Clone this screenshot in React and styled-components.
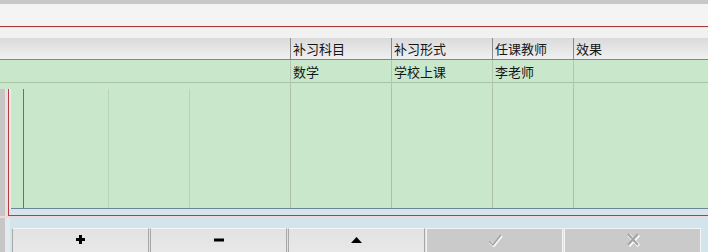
import React from 'react'
import styled, {createGlobalStyle} from 'styled-components'

const GlobalStyle = createGlobalStyle`
  html, body {
    margin: 0;
    padding: 0;
    background: #f1f1f1;
    overflow: hidden;
  }
  body {
    font-family: "Noto Sans CJK SC", "Noto Sans", sans-serif;
  }
`

const Page = styled.div`
  width: 708px;
  height: 252px;
  display: flex;
  flex-direction: column;
  overflow: hidden;
  background: #f1f1f1;
`

const TopStrip = styled.div`
  height: 4px;
  background: #c8c8c8;
`

const Toolbar = styled.div`
  height: 22px;
  background: #f4f4f4;
  border-bottom: 1px solid #a53a3a;
`

const ToolbarGap = styled.div`
  height: 10px;
  border-top: 1px solid #f6dcdc;
  background: #f1f1f1;
`

const Header = styled.div`
  display: grid;
  grid-template-columns: 290px 101px 101px 81px 1fr;
  height: 21px;
  background: linear-gradient(#dadada, #f0f0f0);
  border-bottom: 1px solid #7d8b7d;
`

const HeadCell = styled.div`
  border-left: ${(p) => (p.$first ? 'none' : '1px solid #8a8a8a')};
  padding-left: 2px;
  font-size: 13px;
  line-height: 21px;
  color: #161616;
  white-space: nowrap;
`

const DataRow = styled.div`
  display: grid;
  grid-template-columns: 290px 101px 101px 81px 1fr;
  height: 22px;
  background: #c9e8cb;
  border-bottom: 1px solid #a9c3a9;
`

const DataCell = styled.div`
  border-left: ${(p) => (p.$first ? 'none' : '1px solid #b2c6b2')};
  padding-left: 2px;
  font-size: 13px;
  line-height: 23px;
  color: #161616;
  white-space: nowrap;
`

const FillRow = styled(DataRow)`
  height: 6px;
  border-bottom: none;
`

const Body = styled.div`
  display: flex;
  height: 128px;
`

const Gutter = styled.div`
  width: 8px;
  flex: none;
  background: linear-gradient(90deg, #c6c6c6 0 5px, #e6e2e2 5px);
`

const Frame = styled.div`
  flex: 1;
  display: flex;
  flex-direction: column;
  border-left: 1px solid #b33c3c;
  border-bottom: 1px solid #b33c3c;
  padding-left: 2px;
  background: #f7e8e8;
`

const GridArea = styled.div`
  flex: 1;
  display: grid;
  grid-template-columns: 12px 85px 81px 101px 101px 101px 81px 1fr;
  background: #c9e8cb;
  border-bottom: 1px solid #6f8696;
`

const lineColor = (p) => {
  if (p.$first) return 'none'
  if (p.$dark) return '1px solid #667566'
  if (p.$faint) return '1px solid #b9d3b9'
  return '1px solid #aabfaa'
}

const GridCol = styled.div`
  border-left: ${lineColor};
`

const BlueStrip = styled.div`
  height: 6px;
  background: #d6e5ec;
  margin-left: -2px;
`

const Footer = styled.div`
  flex: 1;
  display: flex;
  background: #d4e4ec;
  border-top: 2px solid #efd8dc;
`

const FooterGutter = styled.div`
  width: 12px;
  flex: none;
  background: linear-gradient(90deg, #c6c6c6 0 5px, #e4e9eb 5px 10px, #d4e4ec 10px);
`

const ButtonBar = styled.div`
  display: flex;
  gap: 1px;
  padding-top: 10px;
  align-items: flex-start;
`

const Button = styled.div`
  box-sizing: border-box;
  width: 137px;
  height: 24px;
  display: flex;
  align-items: center;
  justify-content: center;
  padding-bottom: 2px;
  background: ${(p) => (p.$disabled ? '#cacaca' : 'linear-gradient(#e2e2e2, #e8e8e8)')};
  border: 1px solid ${(p) => (p.$disabled ? '#f4f4f4' : '#a8a8a8')};
  border-top-color: ${(p) => (p.$disabled ? '#f4f4f4' : '#f6f6f6')};
  border-bottom: none;
`

const PlusIcon = () => (
  <svg width="9" height="9" viewBox="0 0 9 9">
    <path d="M3 0h3v3h3v3H6v3H3V6H0V3h3z" fill="#000" />
  </svg>
)

const MinusIcon = () => (
  <svg width="10" height="4" viewBox="0 0 10 4">
    <rect x="0" y="0.5" width="10" height="3" fill="#000" />
  </svg>
)

const UpIcon = () => (
  <svg width="11" height="6" viewBox="0 0 11 6">
    <path d="M5.5 0L11 6H0z" fill="#000" />
  </svg>
)

const CheckIcon = () => (
  <svg width="16" height="14" viewBox="0 0 16 14">
    <path d="M2.5 8.5l3.5 3.5 8-10" fill="none" stroke="#fbfbfb" strokeWidth="2.4" transform="translate(0.8 0.8)" />
    <path d="M2.5 8.5l3.5 3.5 8-10" fill="none" stroke="#a0a0a0" strokeWidth="1.4" />
  </svg>
)

const CrossIcon = () => (
  <svg width="16" height="15" viewBox="0 0 16 15">
    <path d="M3 2l10 11M13 2L3 13" fill="none" stroke="#fbfbfb" strokeWidth="3.4" transform="translate(0.8 0.8)" />
    <path d="M3 2l10 11M13 2L3 13" fill="none" stroke="#a4a4a4" strokeWidth="2" />
  </svg>
)

const headers = ['补习科目', '补习形式', '任课教师', '效果']
const rowData = ['数学', '学校上课', '李老师', '']

const App = () => {
  return (
    <Page>
      <GlobalStyle />
      <TopStrip />
      <Toolbar />
      <ToolbarGap />
      <Header>
        <HeadCell $first />
        {headers.map((h) => (
          <HeadCell key={h}>{h}</HeadCell>
        ))}
      </Header>
      <DataRow>
        <DataCell $first />
        {rowData.map((d, i) => (
          <DataCell key={i}>{d}</DataCell>
        ))}
      </DataRow>
      <FillRow>
        <DataCell $first />
        <DataCell />
        <DataCell />
        <DataCell />
        <DataCell />
      </FillRow>
      <Body>
        <Gutter />
        <Frame>
          <GridArea>
            <GridCol $first />
            <GridCol $dark />
            <GridCol $faint />
            <GridCol $faint />
            <GridCol />
            <GridCol />
            <GridCol />
            <GridCol />
          </GridArea>
          <BlueStrip />
        </Frame>
      </Body>
      <Footer>
        <FooterGutter />
        <ButtonBar>
          <Button><PlusIcon /></Button>
          <Button><MinusIcon /></Button>
          <Button><UpIcon /></Button>
          <Button $disabled><CheckIcon /></Button>
          <Button $disabled><CrossIcon /></Button>
        </ButtonBar>
      </Footer>
    </Page>
  )
}

export default App
